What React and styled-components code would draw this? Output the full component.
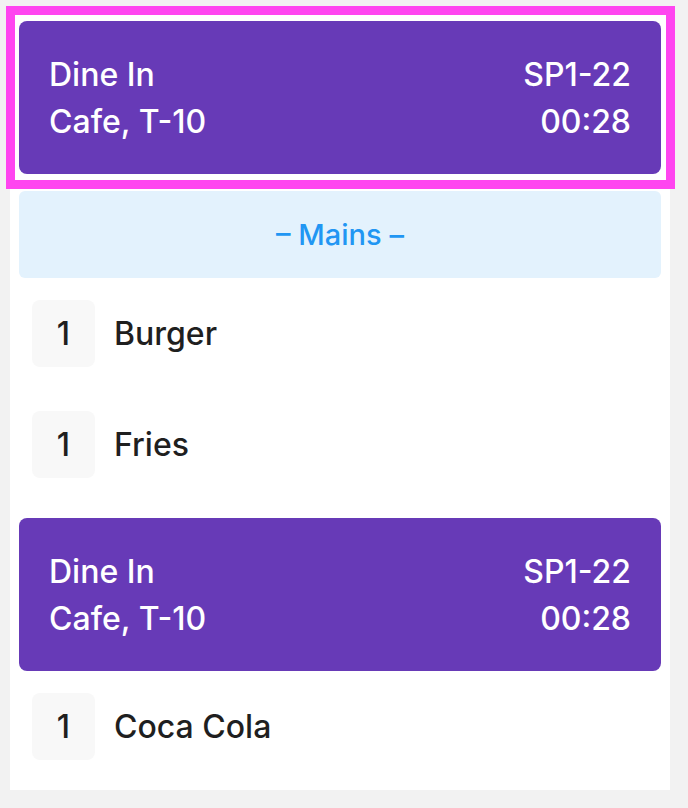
import React from "react";
import styled, { createGlobalStyle } from "styled-components";

const GlobalStyle = createGlobalStyle`
  html, body {
    margin: 0;
    background: #f2f2f2;
  }
  body {
    font-family: Inter, "Noto Sans", "Liberation Sans", sans-serif;
  }
`;

const Page = styled.div`
  padding: 10px;
`;

const Panel = styled.div`
  width: 660px;
  box-sizing: border-box;
  background: #fff;
  padding: 11px 9px 8px;
  display: flex;
  flex-direction: column;
`;

// Square selection ring around a ticket; negative margins keep it out of the flow
const TicketSlot = styled.div`
  margin: ${({ $gap }) => ($gap || 0) - 6}px -5px -6px -4px;
  padding: 6px 5px 6px 4px;
  outline: ${({ $selected }) => ($selected ? "9px solid #ff45f0" : "none")};
`;

// Ticket header card (purple)
const Ticket = styled.div`
  display: flex;
  justify-content: space-between;
  background: #673ab7;
  color: #fff;
  border-radius: 8px;
  padding: 29.5px 30px;
  font-size: 32px;
  font-weight: 500;
  line-height: 47px;
`;

const TicketCol = styled.div`
  display: flex;
  flex-direction: column;
  align-items: ${({ $right }) => ($right ? "flex-end" : "flex-start")};
`;

const Course = styled.div`
  margin-top: 17px;
  height: 87px;
  border-radius: 6px;
  background: #e3f2fd;
  color: #2196f3;
  font-size: 29px;
  font-weight: 500;
  display: flex;
  align-items: center;
  justify-content: center;
`;

const ItemRow = styled.div`
  display: flex;
  align-items: center;
  gap: 19px;
  padding: 22px 13px;
`;

const Qty = styled.div`
  width: 63px;
  height: 67px;
  border-radius: 8px;
  background: #f8f8f8;
  color: #1f1f1f;
  font-size: 32px;
  font-weight: 500;
  display: flex;
  align-items: center;
  justify-content: center;
`;

const ItemName = styled.div`
  color: #1f1f1f;
  font-size: 32px;
  font-weight: 500;
`;

const orders = [
  {
    id: "a",
    selected: true,
    course: "Mains",
    items: [
      { qty: 1, name: "Burger" },
      { qty: 1, name: "Fries" },
    ],
  },
  {
    id: "b",
    items: [{ qty: 1, name: "Coca Cola" }],
  },
];

function TicketHeader({ selected, gap }) {
  return (
    <TicketSlot $selected={selected} $gap={gap}>
      <Ticket>
        <TicketCol>
          <span>Dine In</span>
          <span>Cafe, T-10</span>
        </TicketCol>
        <TicketCol $right>
          <span>SP1-22</span>
          <span>00:28</span>
        </TicketCol>
      </Ticket>
    </TicketSlot>
  );
}

export default function App() {
  return (
    <Page>
      <GlobalStyle />
      <Panel>
        {orders.map((order, i) => (
          <React.Fragment key={order.id}>
            <TicketHeader selected={order.selected} gap={i === 0 ? 0 : 18} />
            {order.course && <Course>– {order.course} –</Course>}
            {order.items.map((item) => (
              <ItemRow key={item.name}>
                <Qty>{item.qty}</Qty>
                <ItemName>{item.name}</ItemName>
              </ItemRow>
            ))}
          </React.Fragment>
        ))}
      </Panel>
    </Page>
  );
}
